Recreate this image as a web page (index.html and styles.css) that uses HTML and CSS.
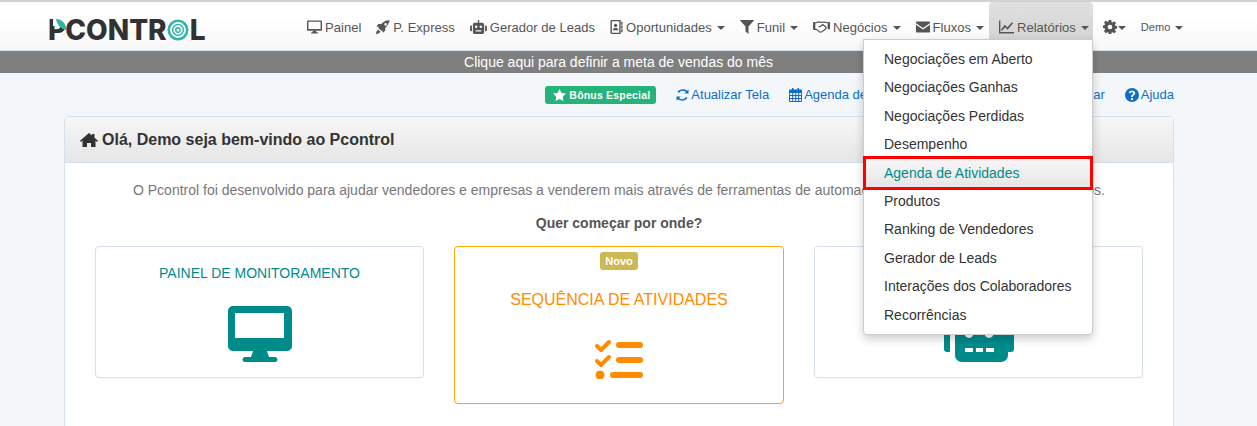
FILE: index.html
```html
<!DOCTYPE html>
<html lang="pt-BR">
<head>
<meta charset="utf-8">
<title>Pcontrol</title>
<link rel="stylesheet" href="styles.css">
</head>
<body>
<header class="navbar">
  <a class="logo"><span class="logo-p">P<svg class="logo-leaf" viewBox="0 0 13 11"><path d="M0 0h13v7H0z" fill="#fff"/><path d="M3 0c6 0 10 4 10 11C8 10 4 6 3 0z" fill="#2fb5ac"/></svg></span><span>CONTR</span><svg class="logo-o" viewBox="0 0 22 22"><g fill="none" stroke="#2fb5ac"><circle cx="11" cy="11" r="9.200" stroke-width="2.600"/><circle cx="11" cy="11" r="5.400" stroke-width="1.500"/><circle cx="11" cy="11" r="2.200" stroke-width="1.400"/></g></svg><span>L</span></a>
  <nav class="nav">
    <a class="nav-item"><svg class="ico" viewBox="0 0 16 14"><path fill-rule="evenodd" d="M1.200 0h13.600c.7 0 1.200.5 1.200 1.200v8.600c0 .7-.5 1.200-1.200 1.200H1.200C.5 11 0 10.500 0 9.800V1.200C0 .5.500 0 1.200 0zM1.500 1.500v7.500h13V1.500z"/><path d="M6.300 11h3.400l.4 1.500h1.400v1.500H4.500v-1.500h1.400z"/></svg>Painel</a>
    <a class="nav-item"><svg class="ico ico-rocket" viewBox="0 0 16 16"><path d="M15.800.200C12 0 8.500 1.500 6 4.500H2.800L.3 7.500l3 .3-.7 1.200 3.400 3.400 1.200-.7.300 3 3-2.500v-3.200c3-2.500 4.500-6 5.300-9.300zM11 3.500a1.500 1.500 0 1 1 0 3 1.500 1.500 0 0 1 0-3zM2.500 11C1 11.500.3 13.500 0 16c2.500-.3 4.500-1 5-2.500z"/></svg>P. Express</a>
    <a class="nav-item"><svg class="ico ico-wide" viewBox="0 0 18 15"><path fill-rule="evenodd" d="M8.300 0h1.400v3H13c1.100 0 2 .9 2 2v8c0 1.100-.9 2-2 2H5c-1.100 0-2-.9-2-2V5c0-1.100.9-2 2-2h3.300zM6.500 6a1.300 1.300 0 1 0 0 2.600 1.300 1.300 0 0 0 0-2.600zm5 0a1.300 1.300 0 1 0 0 2.600 1.300 1.300 0 0 0 0-2.600zM6 11v1.300h6V11z"/><path d="M0 7c0-.6.400-1 1-1h1v6H1c-.6 0-1-.4-1-1zm18 0c0-.6-.4-1-1-1h-1v6h1c.6 0 1-.4 1-1z"/></svg>Gerador de Leads</a>
    <a class="nav-item"><svg class="ico ico-book" viewBox="0 0 13 15"><path fill-rule="evenodd" d="M1.500 0h9.500v15H1.500C.700 15 0 14.300 0 13.500v-12C0 .7.700 0 1.500 0zm0 1.400v12.200h8V1.400zM5.500 4a1.800 1.800 0 1 1 0 3.600 1.800 1.800 0 0 1 0-3.600zM2.500 11c0-1.600 1.300-2.600 3-2.600s3 1 3 2.600z"/><path d="M11.500 2H13v3h-1.500zm0 4H13v3h-1.500zm0 4H13v3h-1.500z"/></svg>Oportunidades<i class="caret"></i></a>
    <a class="nav-item"><svg class="ico ico-funnel" viewBox="0 0 14 14"><path d="M.300 0h13.400c.3 0 .4.300.2.500L8.500 6.500V14L5.500 11.500v-5L.1.500C-.1.300 0 0 .3 0z"/></svg>Funil<i class="caret"></i></a>
    <a class="nav-item"><svg class="ico ico-wide" viewBox="0 0 18 12"><path fill="none" stroke="currentColor" stroke-width="1.300" d="M.500 1.500h3l2-.8 3 .3 2-.3 3 .3 1.500.5h2.500M.500 8.500h3l4 3 1.500-.2 4-2.800 1-2-3.500-3.200-2.500 2-2 .2"/><path d="M0 1h2.500v7.500H0zm15.500 0H18v7.500h-2.500z"/></svg>Negócios<i class="caret"></i></a>
    <a class="nav-item"><svg class="ico ico-mail" viewBox="0 0 14 11"><path d="M1 0h12c.6 0 1 .4 1 1v.8L7 6.500 0 1.800V1c0-.6.400-1 1-1zM0 3.300l7 4.700 7-4.700V10c0 .6-.4 1-1 1H1c-.6 0-1-.4-1-1z"/></svg>Fluxos<i class="caret"></i></a>
    <a class="nav-item nav-item-open"><svg class="ico" viewBox="0 0 14 12"><path d="M0 0h1.300v10.700H14V12H0z"/><path fill="none" stroke="currentColor" stroke-width="1.500" d="M2.500 9l3-4 2.500 2.500L12.500 2"/></svg>Relatórios<i class="caret"></i></a>
    <a class="nav-item nav-item-gear"><svg class="ico ico-gear" viewBox="0 0 14 14"><path fill-rule="evenodd" d="M5.800 0h2.400l.4 2 1 .4 1.700-1.100 1.700 1.700-1.100 1.700.4 1 2 .4v2.400l-2 .4-.4 1 1.100 1.700-1.700 1.700-1.700-1.100-1 .4-.4 2H5.800l-.4-2-1-.4-1.700 1.100L1 11l1.100-1.700-.4-1-2-.4V5.500l2-.4.4-1L1 2.400 2.700.7l1.700 1.100 1-.4zM7 4.700a2.300 2.300 0 1 0 0 4.600 2.300 2.300 0 0 0 0-4.600z"/></svg><i class="caret caret-tight"></i></a>
    <a class="nav-item nav-item-user">Demo<i class="caret"></i></a>
  </nav>
</header>
<a class="goal-bar">Clique aqui para definir a meta de vendas do mês</a>
<main class="page">
  <div class="actions">
    <span class="badge-bonus"><svg class="ico-star" viewBox="0 0 14 13"><path fill="#fff" d="M7 0l2.100 4.300 4.900.7-3.500 3.300.8 4.700L7 10.800 2.700 13l.8-4.700L0 5l4.900-.7z"/></svg>Bônus Especial</span>
    <a class="action"><svg class="ico-act" viewBox="0 0 14 14"><path d="M13.500 1v4.500H9l1.700-1.700C8.700 1.800 5 2 3.500 4.500L1.500 4C3.500.5 8.500 0 12 2.500zM.5 13V8.500H5L3.300 10.200c2 2 5.700 1.800 7.200-.7l2 .5c-2 3.500-7 4-10.500 1.500z"/></svg>Atualizar Tela</a>
    <a class="action"><svg class="ico-act" viewBox="0 0 13 14"><path fill-rule="evenodd" d="M3 0h1.500v1.500h4V0H10v1.500h2c.6 0 1 .4 1 1V13c0 .6-.4 1-1 1H1c-.6 0-1-.4-1-1V2.500c0-.6.400-1 1-1h2zM1 5v2h2.200V5zm3.200 0v2h2V5zm3 0v2h2V5zm3 0v2H12V5zM1 8v2h2.200V8zm3.200 0v2h2V8zm3 0v2h2V8zm3 0v2H12V8zM1 11v2h2.200v-2zm3.200 0v2h2v-2zm3 0v2h2v-2zm3 0v2H12v-2z"/></svg>Agenda de Atividades</a>
    <a class="action action-far">Pesquisar</a>
    <a class="action"><svg class="ico-act ico-help" viewBox="0 0 14 14"><path fill-rule="evenodd" d="M7 0a7 7 0 1 1 0 14A7 7 0 0 1 7 0zM6 10v2h2v-2zM7 2.500c-1.700 0-3 .9-3.200 2.500l1.800.3C5.800 4.500 6.300 4.200 7 4.200c.7 0 1.200.4 1.200 1 0 .5-.3.800-.9 1.200-.9.600-1.300 1.100-1.300 2.100v.5h2v-.3c0-.5.200-.7.800-1.100C9.600 7 10.200 6.300 10.200 5.100c0-1.600-1.400-2.600-3.200-2.600z"/></svg>Ajuda</a>
  </div>
  <section class="panel">
    <h1 class="panel-head"><svg class="ico-home" viewBox="0 0 18 14"><path d="M9 0l3 2.600V1h2.500v3.800L18 7.800l-1 1.100-1.500-1.300V14H11v-4H7v4H2.500V7.600L1 8.900 0 7.800z"/></svg>Olá, Demo seja bem-vindo ao Pcontrol</h1>
    <div class="panel-body">
      <p class="intro">O Pcontrol foi desenvolvido para ajudar vendedores e empresas a venderem mais através de ferramentas de automação de marketing, vendas e processos.</p>
      <p class="question">Quer começar por onde?</p>
      <div class="cards">
        <a class="card">
          <h2 class="card-title">PAINEL DE MONITORAMENTO</h2>
          <svg class="card-icon" width="64" height="56" viewBox="0 0 64 56"><path fill-rule="evenodd" d="M5 0h54c2.800 0 5 2.200 5 5v35c0 2.800-2.200 5-5 5H5c-2.800 0-5-2.200-5-5V5c0-2.800 2.200-5 5-5zM7 7v25h49V7z"/><path d="M25 45h14l2 6H23zM17 51h30c1.400 0 2.500 1.100 2.500 2.500S48.400 56 47 56H17c-1.400 0-2.500-1.100-2.500-2.500S15.600 51 17 51z"/></svg>
        </a>
        <a class="card card-new">
          <span class="badge-new">Novo</span>
          <h2 class="card-title card-title-new">SEQUÊNCIA DE ATIVIDADES</h2>
          <svg class="card-icon" width="48" height="40" viewBox="0 0 48 40"><path fill="none" stroke="currentColor" stroke-width="4" stroke-linecap="round" stroke-linejoin="round" d="M2 7l4 4 8-8M2 22l4 4 8-8"/><circle cx="5" cy="36" r="4.500"/><rect x="21" y="3" width="27" height="6" rx="3"/><rect x="21" y="18" width="27" height="6" rx="3"/><rect x="15" y="33" width="33" height="6" rx="3"/></svg>
        </a>
        <a class="card">
          <h2 class="card-title">GERADOR DE LEADS</h2>
          <svg class="card-icon" width="70" height="56" viewBox="0 0 70 56"><path d="M0 22c0-2 1-3 3-3h3v27H3c-2 0-3-1-3-3zm70 0c0-2-1-3-3-3h-3v27h3c2 0 3-1 3-3z"/><path fill-rule="evenodd" d="M33 0h4v8h20c4 0 7 3 7 7v34c0 4-3 7-7 7H18c-4 0-7-3-7-7V15c0-4 3-7 7-7h15zM25 20a5 6 0 1 0 0 12 5 6 0 0 0 0-12zm20 0a5 6 0 1 0 0 12 5 6 0 0 0 0-12zM21 42v4h8v-4zm11 0v4h7v-4zm10 0v4h8v-4z"/></svg>
        </a>
      </div>
    </div>
  </section>
</main>
<ul class="menu">
  <li class="menu-item">Negociações em Aberto</li>
  <li class="menu-item">Negociações Ganhas</li>
  <li class="menu-item">Negociações Perdidas</li>
  <li class="menu-item">Desempenho</li>
  <li class="menu-item menu-item-active">Agenda de Atividades</li>
  <li class="menu-item">Produtos</li>
  <li class="menu-item">Ranking de Vendedores</li>
  <li class="menu-item">Gerador de Leads</li>
  <li class="menu-item">Interações dos Colaboradores</li>
  <li class="menu-item">Recorrências</li>
</ul>
</body>
</html>
```
FILE: styles.css
```css
* { box-sizing: border-box; }
html, body { margin: 0; height: 100%; overflow: hidden; }
body {
  background: #f4f7fa;
  color: #555;
  font-family: "Liberation Sans", Arial, sans-serif;
  font-size: 14px;
  position: relative;
}
a { color: inherit; text-decoration: none; }

.navbar {
  display: flex;
  align-items: stretch;
  height: 51px;
  border-top: 2px solid #ccd2d8;
  border-bottom: 1px solid #d5e0ea;
  background: linear-gradient(#fff 0%, #fff 30%, #f8f8f8 100%);
}
.logo {
  display: flex;
  align-items: center;
  margin-left: 48px;
  width: 249px;
  font-family: "Inter", "Liberation Sans", sans-serif;
  font-weight: 800;
  font-size: 28px;
  letter-spacing: 0;
  color: #323232;
  height: 48px;
  padding-top: 7px;
}
.logo-p { position: relative; margin-right: -1px; }
.logo-leaf { position: absolute; left: 5px; top: 6px; width: 13px; height: 11px; }
.logo-o { width: 22px; height: 22px; margin: 0 1px 0 0; }

.nav { display: flex; align-items: flex-start; height: 48px; }
.nav-item {
  display: flex;
  align-items: center;
  height: 38px;
  padding: 12px 5px 0 10px;
  color: #555;
  font-size: 13px;
  letter-spacing: .03px;
}
.nav-item-open {
  padding-right: 4px;
  background: linear-gradient(#e0e0e0, #d4d4d4);
  border-radius: 4px 4px 0 0;
}
.nav-item-gear { padding-right: 0; }
.nav-item-user { font-size: 11px; padding-left: 15px; }
.ico { width: 15px; height: 14px; margin-right: 3px; fill: currentColor; flex: none; }
.ico-rocket { width: 14px; }
.ico-wide { width: 17px; margin-right: 3px; }
.ico-book { width: 13px; margin-right: 3px; }
.ico-funnel { width: 14px; margin-right: 3px; }
.ico-mail { width: 14px; margin-right: 3px; }
.ico-gear { width: 14px; margin-right: 0; }
.caret {
  display: inline-block;
  width: 0;
  height: 0;
  margin-left: 5px;
  border-left: 4px solid transparent;
  border-right: 4px solid transparent;
  border-top: 4px solid #555;
  margin-top: 2px;
}
.caret-tight { margin-left: 1px; }

.goal-bar {
  display: block;
  height: 22px;
  padding-right: 20px;
  background: #7f7f7f;
  color: #fff;
  text-align: center;
  font-size: 14px;
  line-height: 22px;
}

.page { margin-left: 64px; width: 1110px; }
.actions {
  display: flex;
  justify-content: flex-end;
  align-items: center;
  gap: 20px;
  height: 43px;
  color: #0b6fc9;
}
.action { display: flex; align-items: center; white-space: nowrap; font-size: 13px; }
.action-far { margin-left: 97px; }
.ico-act { width: 13px; height: 14px; margin-right: 2px; fill: currentColor; flex: none; }
.ico-help { width: 14px; }
.badge-bonus {
  display: flex;
  align-items: center;
  height: 18px;
  padding: 0 6px 0 8px;
  border-radius: 3px;
  background: #26b27b;
  color: #fff;
  font-weight: 700;
  font-size: 10.500px;
  letter-spacing: .2px;
}
.ico-star { width: 13px; height: 12px; margin-right: 3px; }

.panel {
  border: 1px solid #d5e0ea;
  border-radius: 4px 4px 0 0;
  background: #fff;
}
.panel-head {
  display: flex;
  align-items: center;
  margin: 0;
  height: 46px;
  padding-left: 15px;
  border-bottom: 1px solid #d5e0ea;
  background: linear-gradient(#f6f6f6, #e6e6e6);
  color: #333;
  font-size: 16px;
  font-weight: 700;
}
.ico-home { width: 18px; height: 14px; margin-right: 4px; fill: #333; }
.panel-body { padding: 0 30px 30px; }
.intro { margin: 0; padding-top: 19px; text-align: center; color: #777; line-height: 16px; font-size: 14px; }
.question { margin: 0; padding-top: 17px; text-align: center; color: #555; font-weight: 700; line-height: 16px; }
.cards {
  display: grid;
  grid-template-columns: 329px 330px 329px;
  gap: 30px;
  align-items: start;
  margin-top: 15px;
}
.card {
  display: flex;
  flex-direction: column;
  align-items: center;
  height: 132px;
  border: 1px solid #d5e0ea;
  border-radius: 4px;
  color: #008b8b;
  background: #fff;
  box-shadow: 0 1px 2px rgba(0,0,0,.03);
}
.card-title { margin: 18px 0 25px; font-size: 14px; font-weight: 400; line-height: 16px; }
.card-icon { fill: currentColor; display: block; }
.card-new {
  height: 158px;
  border-color: #ffa500;
  color: #ff8c00;
}
.card-title-new { margin: 21px 0 30px; font-size: 16px; line-height: 18px; }
.badge-new {
  margin-top: 5px;
  height: 18px;
  padding: 0 5.500px;
  border-radius: 3px;
  background: #cbb956;
  color: #fff;
  font-size: 11px;
  font-weight: 700;
  line-height: 18px;
}

.menu {
  position: absolute;
  left: 863px;
  top: 39px;
  width: 230px;
  margin: 0;
  padding: 5px 0;
  list-style: none;
  border: 1px solid #ccc;
  border-radius: 0 0 4px 4px;
  background: #fff;
  box-shadow: 0 4px 10px rgba(0,0,0,.2);
}
.menu-item {
  position: relative;
  height: 28.400px;
  line-height: 28.400px;
  padding-left: 20px;
  color: #333;
  font-size: 14px;
  white-space: nowrap;
}
.menu-item-active {
  background: linear-gradient(#f7f7f7, #e6e6e6);
  color: #008b8b;
}
.menu-item-active::after {
  content: "";
  position: absolute;
  inset: -3px -1px;
  border: 3px solid #f00;
}
```
